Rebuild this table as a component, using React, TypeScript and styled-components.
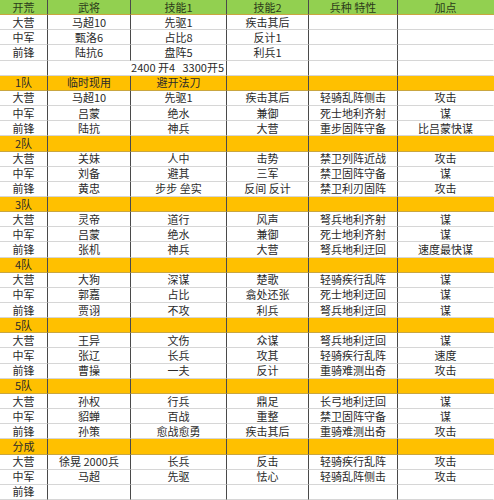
import React from 'react'
import styled, { createGlobalStyle } from 'styled-components'

const GlobalStyle = createGlobalStyle`
  html, body {
    margin: 0;
    padding: 0;
    background: #ffffff;
  }
  body {
    font-family: "Noto Sans CJK SC", "Noto Sans", sans-serif;
  }
`

const COLS = '48px 83px 96px 82px 89px 96px'

const Sheet = styled.div`
  display: grid;
  grid-template-columns: ${COLS};
  grid-template-rows: repeat(33, 1fr);
  width: 494px;
  height: 500px;
  overflow: hidden;
`

type Tone = 'head' | 'group' | 'plain'

const toneBg: Record<Tone, string> = {
  head: '#92d050',
  group: '#ffc000',
  plain: '#ffffff',
}

const Cell = styled.div<{ $tone: Tone; $span?: number; $align?: string; $last?: boolean }>`
  grid-column: span ${({ $span }) => $span || 1};
  display: flex;
  align-items: center;
  justify-content: ${({ $align }) => $align || 'center'};
  padding: 0 2px;
  box-sizing: border-box;
  background: ${({ $tone }) => toneBg[$tone]};
  border-right: 1px solid ${({ $last }) => ($last ? 'transparent' : '#4a4a4a')};
  border-bottom: 1px solid ${({ $tone }) => ($tone === 'plain' ? '#d6d6d6' : '#c9a640')};
  font-size: 11px;
  line-height: 1;
  color: ${({ $tone }) => ($tone === 'head' ? '#2b3a1a' : '#2a2a2a')};
  white-space: nowrap;
  overflow: visible;
`

type Row = { tone: Tone; cells: string[] }

const header: Row = { tone: 'head', cells: ['开荒', '武将', '技能1', '技能2', '兵种 特性', '加点'] }

const opening: Row[] = [
  { tone: 'plain', cells: ['大营', '马超10', '先驱1', '疾击其后', '', ''] },
  { tone: 'plain', cells: ['中军', '甄洛6', '占比8', '反计1', '', ''] },
  { tone: 'plain', cells: ['前锋', '陆抗6', '盘阵5', '利兵1', '', ''] },
]

const teams: Row[] = [
  { tone: 'group', cells: ['1队', '临时现用', '避开法刀', '', '', ''] },
  { tone: 'plain', cells: ['大营', '马超10', '先驱1', '疾击其后', '轻骑乱阵侧击', '攻击'] },
  { tone: 'plain', cells: ['中军', '吕蒙', '绝水', '兼御', '死士地利齐射', '谋'] },
  { tone: 'plain', cells: ['前锋', '陆抗', '神兵', '大营', '重步固阵守备', '比吕蒙快谋'] },
  { tone: 'group', cells: ['2队', '', '', '', '', ''] },
  { tone: 'plain', cells: ['大营', '关妹', '人中', '击势', '禁卫列阵近战', '攻击'] },
  { tone: 'plain', cells: ['中军', '刘备', '避其', '三军', '禁卫固阵守备', '谋'] },
  { tone: 'plain', cells: ['前锋', '黄忠', '步步  垒实', '反间  反计', '禁卫利刃固阵', '攻击'] },
  { tone: 'group', cells: ['3队', '', '', '', '', ''] },
  { tone: 'plain', cells: ['大营', '灵帝', '道行', '风声', '弩兵地利齐射', '谋'] },
  { tone: 'plain', cells: ['中军', '吕蒙', '绝水', '兼御', '死士地利齐射', '谋'] },
  { tone: 'plain', cells: ['前锋', '张机', '神兵', '大营', '弩兵地利迂回', '速度最快谋'] },
  { tone: 'group', cells: ['4队', '', '', '', '', ''] },
  { tone: 'plain', cells: ['大营', '大狗', '深谋', '楚歌', '轻骑疾行乱阵', '谋'] },
  { tone: 'plain', cells: ['中军', '郭嘉', '占比', '翕处还张', '死士地利迂回', '谋'] },
  { tone: 'plain', cells: ['前锋', '贾诩', '不攻', '利兵', '弩兵地利迂回', '谋'] },
  { tone: 'group', cells: ['5队', '', '', '', '', ''] },
  { tone: 'plain', cells: ['大营', '王异', '文伤', '众谋', '弩兵地利迂回', '谋'] },
  { tone: 'plain', cells: ['中军', '张辽', '长兵', '攻其', '轻骑疾行乱阵', '速度'] },
  { tone: 'plain', cells: ['前锋', '曹操', '一夫', '反计', '重骑难测出奇', '攻击'] },
  { tone: 'group', cells: ['5队', '', '', '', '', ''] },
  { tone: 'plain', cells: ['大营', '孙权', '行兵', '鼎足', '长弓地利迂回', '谋'] },
  { tone: 'plain', cells: ['中军', '貂蝉', '百战', '重整', '禁卫固阵守备', '谋'] },
  { tone: 'plain', cells: ['前锋', '孙策', '愈战愈勇', '疾击其后', '重骑难测出奇', '攻击'] },
  { tone: 'group', cells: ['分成', '', '', '', '', ''] },
  { tone: 'plain', cells: ['大营', '徐晃 2000兵', '长兵', '反击', '轻骑疾行乱阵', '攻击'] },
  { tone: 'plain', cells: ['中军', '马超', '先驱', '怯心', '轻骑乱阵侧击', '攻击'] },
  { tone: 'plain', cells: ['前锋', '', '', '', '', ''] },
]

const renderRow = (row: Row, key: string) =>
  row.cells.map((text, i) => (
    <Cell key={`${key}-${i}`} $tone={row.tone} $last={i === row.cells.length - 1}>
      {text}
    </Cell>
  ))

export default function App() {
  return (
    <>
      <GlobalStyle />
      <Sheet>
        {renderRow(header, 'h')}
        {opening.map((r, i) => renderRow(r, `o${i}`))}
        <Cell $tone="plain">{''}</Cell>
        <Cell $tone="plain" $span={2} $align="flex-end">
          2400 开4&nbsp;&nbsp;&nbsp;3300开5
        </Cell>
        <Cell $tone="plain">{''}</Cell>
        <Cell $tone="plain">{''}</Cell>
        <Cell $tone="plain" $last>{''}</Cell>
        {teams.map((r, i) => renderRow(r, `t${i}`))}
      </Sheet>
    </>
  )
}
